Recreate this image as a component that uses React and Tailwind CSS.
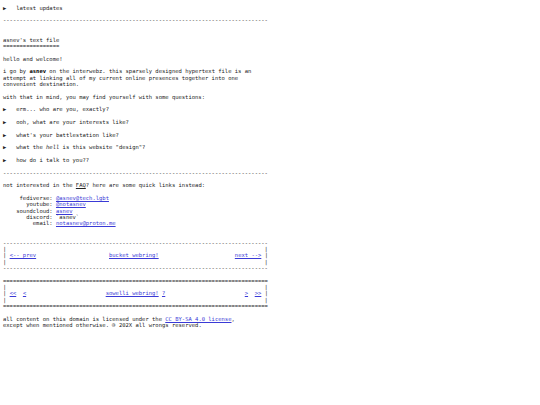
import React from "react";

const A = ({ children }) => (
  <a href="#" className="text-[#3a3ad6] underline">
    {children}
  </a>
);

const L = ({ children }) => (
  <div className="whitespace-pre h-[6.353px]">{children ?? "\u00a0"}</div>
);

const dash = "-".repeat(80);
const eq = "=".repeat(80);
const empty = "|" + " ".repeat(78) + "|";

export default function App() {
  return (
    <div
      className="w-[540px] h-[405px] overflow-hidden bg-white text-[#222222] pl-[3px] pt-[4.8px] text-[5.5px] leading-[6.353px]"
      style={{ fontFamily: '"DejaVu Sans Mono", monospace' }}
    >
      <L>{"▶   latest updates"}</L>
      <L />
      <L>{dash}</L>
      <L />
      <L />
      <L>{"asnev's text file"}</L>
      <L>{"=".repeat(17)}</L>
      <L />
      <L>{"hello and welcome!"}</L>
      <L />
      <L>
        {"i go by "}
        <b className="text-black">asnev</b>
        {" on the interwebz. this sparsely designed hypertext file is an"}
      </L>
      <L>{"attempt at linking all of my current online presences together into one"}</L>
      <L>{"convenient destination."}</L>
      <L />
      <L>{"with that in mind, you may find yourself with some questions:"}</L>
      <L />
      <L>{"▶   erm... who are you, exactly?"}</L>
      <L />
      <L>{"▶   ooh, what are your interests like?"}</L>
      <L />
      <L>{"▶   what's your battlestation like?"}</L>
      <L />
      <L>
        {"▶   what the "}
        <i>hell</i>
        {' is this website "design"?'}
      </L>
      <L />
      <L>{"▶   how do i talk to you??"}</L>
      <L />
      <L>{dash}</L>
      <L />
      <L>
        {"not interested in the "}
        <abbr className="underline">FAQ</abbr>
        {"? here are some quick links instead:"}
      </L>
      <L />
      <L>
        {"     fediverse: "}
        <A>@asnev@tech.lgbt</A>
      </L>
      <L>
        {"       youtube: "}
        <A>@notasnev</A>
      </L>
      <L>
        {"    soundcloud: "}
        <A>asnev</A>
      </L>
      <L>{"       discord: `asnev`"}</L>
      <L>
        {"         email: "}
        <A>notasnev@proton.me</A>
      </L>
      <L />
      <L />
      <L>{dash}</L>
      <L>{empty}</L>
      <L>
        {"| "}
        <A>{"<-- prev"}</A>
        {" ".repeat(22)}
        <A>bucket webring!</A>
        {" ".repeat(23)}
        <A>{"next -->"}</A>
        {" |"}
      </L>
      <L>{empty}</L>
      <L>{dash}</L>
      <L />
      <L>{eq}</L>
      <L>{empty}</L>
      <L>
        {"| "}
        <A>{"<<"}</A>
        {"  "}
        <A>{"<"}</A>
        {" ".repeat(24)}
        <A>sowelli webring!</A>
        {" "}
        <A>?</A>
        {" ".repeat(24)}
        <A>{">"}</A>
        {"  "}
        <A>{">>"}</A>
        {" |"}
      </L>
      <L>{empty}</L>
      <L>{eq}</L>
      <L />
      <L>
        {"all content on this domain is licensed under the "}
        <A>CC BY-SA 4.0 license</A>
        {","}
      </L>
      <L>
        {"except when mentioned otherwise. "}
        <span className="inline-block -scale-x-100">©</span>
        {" 202X all wrongs reserved."}
      </L>
    </div>
  );
}
